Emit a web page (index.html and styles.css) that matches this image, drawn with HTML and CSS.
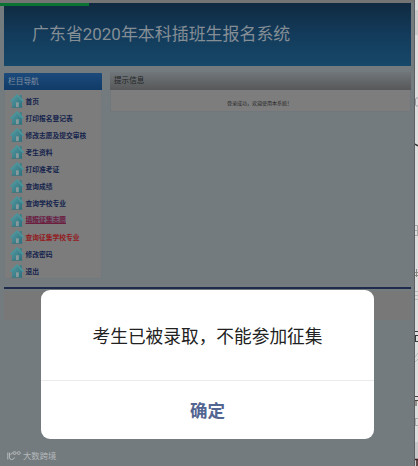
FILE: index.html
```html
<!DOCTYPE html>
<html lang="zh">
<head>
    <meta charset="UTF-8">
    <meta name="viewport" content="width=device-width, initial-scale=1.0">
    <title>广东省2020年本科插班生报名系统</title>
    <link rel="stylesheet" href="styles.css">
</head>
<body>
    <svg class="defs" width="0" height="0">
        <linearGradient id="wall" x1="0" y1="0" x2="1" y2="1">
            <stop offset="0" stop-color="#55969c"/>
            <stop offset="1" stop-color="#2a7280"/>
        </linearGradient>
        <symbol id="home" viewBox="0 0 14 14">
            <path d="M2 6.500 7 1.800l5 4.700v6.900H2z" fill="url(#wall)"/>
            <path d="M9.800 1h2v4.600L9.800 3.800z" fill="#3c7f89"/>
            <path d="M.6 7.600 7 1.200l6.400 6.400" fill="none" stroke="#4a949b" stroke-width="1.800"/>
            <path d="M6 8.300h2.800v5H6z" fill="#8a9a9c"/>
            <path d="M1.400 13.400h11.200" stroke="#38727b" stroke-width=".6"/>
        </symbol>
    </svg>

    <div class="screen">
        <div class="page">
            <header class="banner"><h1>广东省2020年本科插班生报名系统</h1></header>
            <div class="columns">
                <nav class="nav">
                    <h2 class="nav-title">栏目导航</h2>
                    <ul class="nav-list">
                        <li><svg class="icon"><use href="#home"/></svg>首页</li>
                        <li><svg class="icon"><use href="#home"/></svg>打印报名登记表</li>
                        <li><svg class="icon"><use href="#home"/></svg>修改志愿及提交审核</li>
                        <li><svg class="icon"><use href="#home"/></svg>考生资料</li>
                        <li><svg class="icon"><use href="#home"/></svg>打印准考证</li>
                        <li><svg class="icon"><use href="#home"/></svg>查询成绩</li>
                        <li><svg class="icon"><use href="#home"/></svg>查询学校专业</li>
                        <li class="active"><svg class="icon"><use href="#home"/></svg><span>填报征集志愿</span></li>
                        <li class="red"><svg class="icon"><use href="#home"/></svg>查询征集学校专业</li>
                        <li><svg class="icon"><use href="#home"/></svg>修改密码</li>
                        <li><svg class="icon"><use href="#home"/></svg>退出</li>
                    </ul>
                </nav>
                <section class="notice">
                    <h2 class="notice-title">提示信息</h2>
                    <p class="notice-text">登录成功，欢迎使用本系统！</p>
                </section>
            </div>
            <footer class="footer"></footer>
        </div>
        <aside class="edge">
            <svg width="3" height="466" viewBox="0 0 3 466" fill="none">
                <path d="M0 10h3v25H0z" fill="#cccccd"/>
                <path d="M3 98H1.5Q.5 98 .5 100v4q0 2 1 2H3" stroke="#9b9ca4"/>
                <path d="M0 144l3 2" stroke="#333" stroke-width="1.5"/>
                <path d="M0 225.500h3M0 230.500h3M0 235.500h3M2.500 225v10" stroke="#aaa"/>
                <path d="M0 272.500h3M1.500 269v8M0 275.500h3" stroke="#8b8b85"/>
                <path d="M0 291.500h3M0 295.500h3M0 299.500h3" stroke="#bbb"/>
                <path d="M0 331.500h3M0 335.500h3M.500 335v7M0 341.500h3" stroke="#353b3c"/>
                <path d="M3 353l-3 4M0 362l3-3" stroke="#bbb"/>
                <path d="M0 396.500h3M0 400.500h3M1 401v5" stroke="#51443f"/>
                <path d="M.5 418v8M0 418.500h3M0 425.500h3" stroke="#aaa"/>
                <path d="M0 442h3v24H0z" fill="#c8c8ca"/>
                <path d="M0 459.500h3M2 460v6" stroke="#421f23" stroke-width="1.500"/>
            </svg>
        </aside>
        <div class="progress"></div>
        <div class="dialog">
            <p class="dialog-text">考生已被录取，不能参加征集</p>
            <button class="dialog-btn">确定</button>
        </div>
        <div class="watermark">
            <svg width="14" height="10" viewBox="0 0 14 10" fill="none" stroke="#b5b9ba" stroke-width="1">
                <path d="M.8 1.500v7M2.500 1.500v5q0 2 2 2 2.500 0 3-2M3.500 4l2-2.500"/>
                <rect x="6" y=".8" width="3" height="2.500" rx="1"/>
                <rect x="10.200" y=".8" width="3" height="2.500" rx="1"/>
            </svg>
            <span>大数跨境</span>
        </div>
    </div>
</body>
</html>
```

FILE: styles.css
```css
* {
    box-sizing: border-box;
}
body {
    margin: 0;
    font-family: 'Liberation Sans', 'Noto Sans CJK SC', sans-serif;
}
h1, h2, p, ul {
    margin: 0;
    padding: 0;
    font-weight: normal;
}
.defs {
    position: absolute;
}
.screen {
    position: relative;
    display: flex;
    width: 418px;
    height: 466px;
    overflow: hidden;
    background-color: #dededf;
}
.page {
    width: 415px;
    padding: 3px 3px 0 4px;
    border-right: 1px solid #5c6063;
    background: linear-gradient(#747474 3px, #747b7f 3px);
}
.banner {
    height: 63px;
    padding: 17px 0 0 28px;
    background: linear-gradient(#102a40, #133b5b 50%, #164869);
}
.banner h1 {
    font-family: Roboto, 'Noto Sans CJK SC', sans-serif;
    font-size: 16.95px;
    line-height: 28px;
    color: #858e95;
    white-space: nowrap;
}
.columns {
    display: flex;
    align-items: flex-start;
    gap: 8px;
    margin-top: 6px;
}
.nav {
    width: 98px;
    margin-top: 1px;
}
.nav-title {
    height: 17px;
    padding-left: 4px;
    border-radius: 1px 1px 0 0;
    background: linear-gradient(#1b4a7b, #113b68);
    font-size: 7.7px;
    line-height: 17px;
    color: #8190a0;
}
.nav-list {
    height: 189px;
    padding-top: 2px;
    border: 1px solid #72797e;
    border-top: 0;
    background-color: #7c7c7c;
    list-style: none;
}
.nav-list li {
    display: flex;
    align-items: center;
    gap: 2px;
    height: 17px;
    padding-left: 4.5px;
    font-size: 6.75px;
    font-weight: bold;
    color: #14234c;
    white-space: nowrap;
}
.icon {
    width: 14px;
    height: 14px;
}
.nav-list .active {
    color: #6b1f3c;
}
.active span {
    line-height: 8px;
    background-color: #746579;
    text-decoration: underline;
    text-decoration-thickness: .5px;
    text-underline-offset: 1px;
}
.nav-list .red {
    color: #931a20;
}
.notice {
    flex: 1;
}
.notice-title {
    height: 18px;
    padding-left: 4px;
    background: linear-gradient(#70767a, #616466 60%, #565859);
    font-size: 7.6px;
    line-height: 18px;
    color: #222426;
}
.notice-text {
    height: 22px;
    padding-right: 2px;
    border: 1px solid #71787d;
    border-top: 0;
    background-color: #7d7d7d;
    font-size: 5px;
    line-height: 27px;
    text-align: center;
    color: #252525;
}
.footer {
    height: 33px;
    margin-top: 8px;
    border-top: 2px solid #1f2b4c;
    background: linear-gradient(#747b7f 2px, #797878 2px);
}
.edge {
    width: 3px;
}
.edge svg {
    display: block;
}
.progress {
    position: absolute;
    top: 3px;
    left: 0;
    width: 89px;
    height: 3px;
    background-color: #087332;
}
.dialog {
    position: absolute;
    top: 290px;
    left: 41px;
    width: 333px;
    height: 149px;
    border-radius: 9px;
    background-color: #fff;
    text-align: center;
}
.dialog-text {
    height: 91px;
    border-bottom: 1px solid #ebebeb;
    font-size: 17.7px;
    line-height: 94px;
    color: #222;
}
.dialog-btn {
    width: 100%;
    height: 57px;
    padding: 0;
    border: 0;
    background: none;
    font-family: inherit;
    font-size: 17.5px;
    font-weight: bold;
    color: #536591;
}
.watermark {
    position: absolute;
    top: 450px;
    left: 7px;
    display: flex;
    align-items: center;
    gap: 2px;
    font-size: 8.4px;
    line-height: 12px;
    color: #b5b9ba;
}
```
